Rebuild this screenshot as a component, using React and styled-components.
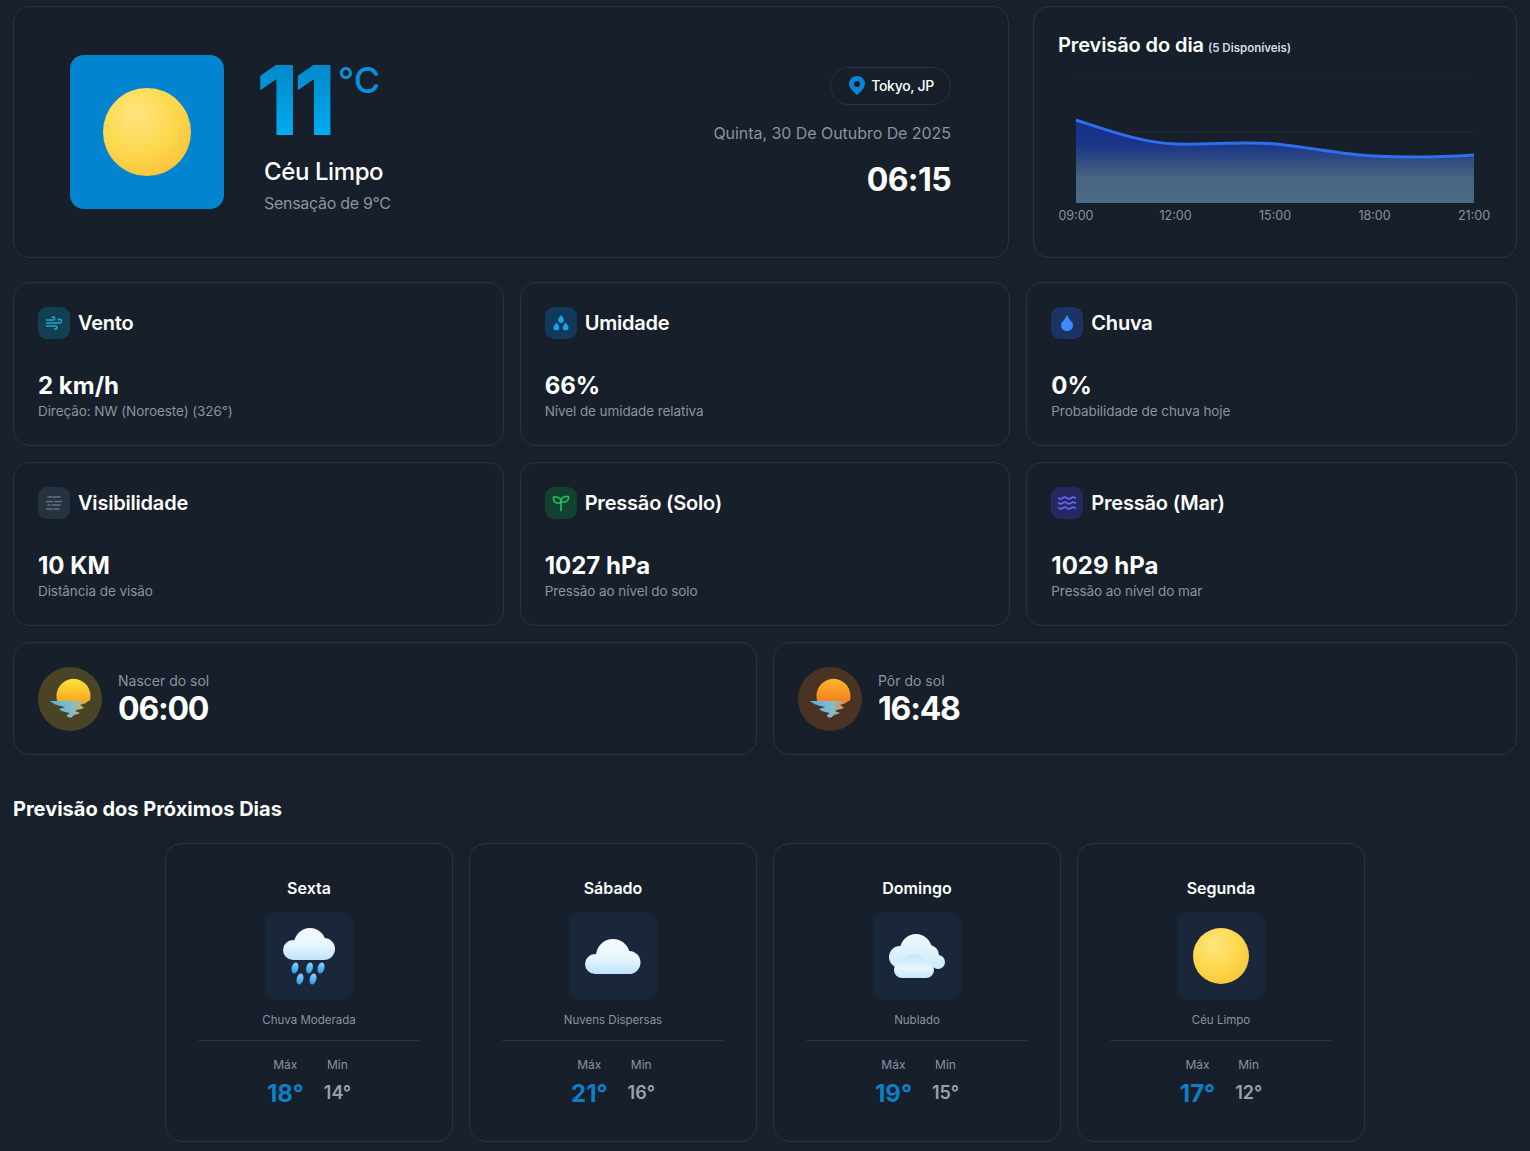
import React from 'react'
import styled, { createGlobalStyle } from 'styled-components'
import { Wind, Waves, Droplet } from 'lucide-react'

const GlobalStyle = createGlobalStyle`
  * { box-sizing: border-box; }
  html, body { margin: 0; padding: 0; background: #17202b; }
  body { font-family: Inter, "Liberation Sans", sans-serif; color: #fff; }
`

const Page = styled.div`
  width: 1530px;
  height: 1151px;
  overflow: hidden;
  padding: 6px 13px 0;
`
const Card = styled.div`
  background: #161f2a;
  border: 1px solid #2a3441;
  border-radius: 16px;
`
const TopRow = styled.div`
  display: grid;
  grid-template-columns: 996px 484px;
  gap: 24px;
`
const Hero = styled(Card)`
  height: 252px;
  padding: 0 57px 0 56px;
  display: flex;
  align-items: center;
  justify-content: space-between;
`
const HeroLeft = styled.div`
  display: flex;
  align-items: center;
  gap: 40px;
`
const HeroIcon = styled.div`
  width: 154px;
  height: 154px;
  border-radius: 14px;
  background: #0284d0;
  display: flex;
  align-items: center;
  justify-content: center;
`
const Sun = styled.div`
  width: ${({ size }) => size}px;
  height: ${({ size }) => size}px;
  border-radius: 50%;
  background: radial-gradient(circle at 38% 30%, #fee57f 0%, #fdd94f 45%, #f5b82e 100%);
`
const HeroInfo = styled.div`
  display: flex;
  flex-direction: column;
  padding-top: 7px;
`
const TempRow = styled.div`
  display: flex;
  align-items: flex-start;
  margin-left: -8px;
`
const TempValue = styled.span`
  font-size: 96px;
  line-height: 86px;
  height: 86px;
  font-weight: 800;
  letter-spacing: -5px;
  background: linear-gradient(180deg, #0284c7 0%, #00b0f5 100%);
  -webkit-background-clip: text;
  background-clip: text;
  color: transparent;
`
const TempUnit = styled.span`
  font-size: 36px;
  line-height: 44px;
  font-weight: 500;
  color: #0a8fd8;
  margin: 1px 0 0 7px;
`
const Condition = styled.div`
  font-size: 24px;
  line-height: 32px;
  font-weight: 500;
  margin-top: 13px;
  letter-spacing: -0.4px;
`
const Feels = styled.div`
  font-size: 16px;
  line-height: 24px;
  letter-spacing: -0.3px;
  color: #8b93a1;
  margin-top: 3px;
`
const HeroRight = styled.div`
  display: flex;
  flex-direction: column;
  align-items: flex-end;
  padding-top: 2px;
`
const LocationPill = styled.div`
  height: 38px;
  padding: 0 16px 0 18px;
  border: 1px solid #2a3441;
  border-radius: 19px;
  display: flex;
  align-items: center;
  gap: 6px;
  font-size: 14px;
  letter-spacing: -0.3px;
  font-weight: 500;
`
const DateText = styled.div`
  font-size: 16px;
  line-height: 24px;
  letter-spacing: -0.05px;
  color: #8b93a1;
  margin-top: 16px;
`
const TimeText = styled.div`
  font-size: 32px;
  line-height: 40px;
  font-weight: 700;
  letter-spacing: -0.6px;
  margin-top: 15px;
`
const ChartCard = styled(Card)`
  height: 252px;
  padding: 24px 24px 0;
`
const ChartTitle = styled.div`
  font-size: 20px;
  line-height: 28px;
  font-weight: 600;
  letter-spacing: -0.1px;
  display: flex;
  align-items: baseline;
  gap: 4px;
`
const ChartNote = styled.span`
  font-size: 11.5px;
  font-weight: 600;
  letter-spacing: 0;
  color: #d7dbe0;
`
const ChartSvg = styled.svg`
  display: block;
  margin-top: 11px;
  text {
    font-family: Inter, "Liberation Sans", sans-serif;
    font-size: 12.5px;
    fill: #8b93a1;
  }
`
const StatGrid = styled.div`
  display: grid;
  grid-template-columns: repeat(3, 1fr);
  gap: 16px;
  margin-top: 24px;
`
const StatCard = styled(Card)`
  height: 164px;
  padding: 24px;
`
const StatHead = styled.div`
  display: flex;
  align-items: center;
  gap: 8px;
  font-size: 20px;
  line-height: 32px;
  font-weight: 600;
  letter-spacing: -0.2px;
`
const IconBox = styled.div`
  width: 32px;
  height: 32px;
  border-radius: 9px;
  background: ${({ bg }) => bg};
  color: ${({ fg }) => fg};
  display: flex;
  align-items: center;
  justify-content: center;
`
const StatValue = styled.div`
  font-size: 24px;
  line-height: 32px;
  font-weight: 700;
  margin-top: 31px;
`
const StatNote = styled.div`
  font-size: 13.5px;
  line-height: 18px;
  letter-spacing: -0.08px;
  color: #8b93a1;
`
const SunGrid = styled.div`
  display: grid;
  grid-template-columns: 1fr 1fr;
  gap: 16px;
  margin-top: 16px;
`
const SunCard = styled(Card)`
  height: 113px;
  padding: 0 24px;
  display: flex;
  align-items: center;
  gap: 16px;
`
const SunBadge = styled.div`
  width: 64px;
  height: 64px;
  border-radius: 50%;
  background: ${({ bg }) => bg};
  display: flex;
  align-items: center;
  justify-content: center;
`
const SunLabel = styled.div`
  font-size: 14px;
  line-height: 18px;
  color: #8b93a1;
  margin-top: 2px;
`
const SunTime = styled.div`
  font-size: 32px;
  line-height: 36px;
  font-weight: 700;
  letter-spacing: -1.2px;
  margin-top: 1px;
`
const SectionTitle = styled.h2`
  margin: 40px 0 0;
  font-size: 20px;
  line-height: 28px;
  font-weight: 700;
`
const ForecastRow = styled.div`
  display: flex;
  justify-content: center;
  gap: 16px;
  margin-top: 20px;
`
const DayCard = styled(Card)`
  width: 288px;
  height: 299px;
  padding: 32px 32px 0;
  display: flex;
  flex-direction: column;
  align-items: center;
`
const DayName = styled.div`
  font-size: 16px;
  line-height: 24px;
  font-weight: 600;
`
const DayIcon = styled.div`
  width: 88px;
  height: 88px;
  margin-top: 12px;
  border-radius: 12px;
  background: #1a2639;
  display: flex;
  align-items: center;
  justify-content: center;
`
const DayDesc = styled.div`
  font-size: 11.5px;
  line-height: 16px;
  color: #8b93a1;
  margin-top: 12px;
`
const Divider = styled.div`
  align-self: stretch;
  height: 1px;
  background: #2a3441;
  margin-top: 12px;
`
const MinMax = styled.div`
  display: flex;
  justify-content: center;
  align-items: flex-start;
  gap: 20px;
  margin-top: 16px;
`
const TempCol = styled.div`
  display: flex;
  flex-direction: column;
  align-items: center;
`
const TempLabel = styled.div`
  font-size: 12px;
  line-height: 16px;
  color: #8b93a1;
`
const MaxValue = styled.div`
  font-size: 24px;
  line-height: 32px;
  font-weight: 700;
  color: #0b7fc8;
  margin-top: 5px;
`
const MinValue = styled.div`
  font-size: 18px;
  line-height: 28px;
  font-weight: 600;
  color: #9aa1ad;
  margin-top: 6px;
`

const PinIcon = () => (
  <svg width="16" height="19" viewBox="0 0 16 19">
    <path d="M8 0C3.600 0 0 3.500 0 7.800 0 13 8 19 8 19s8-6 8-11.200C16 3.500 12.400 0 8 0z" fill="#0a84d4" />
    <circle cx="8" cy="8" r="3" fill="#161f2a" />
  </svg>
)

const VisibilityIcon = () => (
  <svg width="18" height="18" viewBox="0 0 18 18" fill="none" stroke="currentColor" strokeWidth="1.500" strokeLinecap="round">
    <path d="M3 3h3.500M8 3h7M1.500 7.500h6M10 7.500h6.500M3 11h2M7 11h8M1.500 15h5.500M9 15h5" />
  </svg>
)

const DropsIcon = () => (
  <svg width="18" height="18" viewBox="0 0 18 18" fill="currentColor">
    <path d="M9 1c1.600 2 2.900 3.400 2.900 5a2.900 2.900 0 0 1-5.800 0C6.100 4.400 7.400 3 9 1z" />
    <path d="M4.400 8.400c1.600 2 2.900 3.400 2.900 5a2.900 2.900 0 0 1-5.800 0c0-1.600 1.300-3 2.900-5z" />
    <path d="M13.600 8.400c1.600 2 2.900 3.400 2.900 5a2.900 2.900 0 0 1-5.800 0c0-1.600 1.300-3 2.900-5z" />
  </svg>
)

const SproutIcon = () => (
  <svg width="18" height="18" viewBox="0 0 18 18" fill="none" stroke="currentColor" strokeWidth="1.600" strokeLinecap="round" strokeLinejoin="round">
    <path d="M1.500 3h3a5 5 0 0 1 4.500 5v1h-3A4.500 4.500 0 0 1 1.500 4.500z" />
    <path d="M16.500 2.500h-3A4.500 4.500 0 0 0 9 7v1h3a4.500 4.500 0 0 0 4.500-4.500z" />
    <path d="M9 8v8.500" />
  </svg>
)

const SunWater = ({ id, top, bottom }) => (
  <svg width="46" height="42" viewBox="0 0 46 42">
    <defs>
      <linearGradient id={id} x1="0" y1="0" x2="0" y2="1">
        <stop offset="0" stopColor={top} />
        <stop offset="1" stopColor={bottom} />
      </linearGradient>
      <linearGradient id={id + 'w'} x1="0" y1="0" x2="1" y2="0">
        <stop offset="0" stopColor="#4fb3e6" />
        <stop offset="0.6" stopColor="#86bccb" />
        <stop offset="1" stopColor={bottom} />
      </linearGradient>
    </defs>
    <path d="M10.300 23A17 17 0 1 1 42.700 23Z" fill={`url(#${id})`} />
    <path d="M3 23H41C39 26 35 26 33 27C35 28 36 29 37 30C33 32 30 31 28 33C30 34 31 34 33 35C30 37 27 36 26 38C25 40 21 40 20 38C20 36 22 36 23 35C19 34 15 34 12 31C14 30 17 30 18 29C12 28 6 26 3 23Z" fill={`url(#${id}w)`} />
  </svg>
)

// cloud gradients use page units so the stacked circles read as one shape
const CloudDefs = ({ id, y1 = 0, y2 = 32 }) => (
  <defs>
    <linearGradient id={id} gradientUnits="userSpaceOnUse" x1="0" y1={y1} x2="0" y2={y2}>
      <stop offset="0" stopColor="#f6fbff" />
      <stop offset="0.55" stopColor="#e6f5fe" />
      <stop offset="1" stopColor="#bfe3fa" />
    </linearGradient>
    <linearGradient id={id + 'd'} x1="0" y1="0" x2="0" y2="1">
      <stop offset="0" stopColor="#8ed4fb" />
      <stop offset="1" stopColor="#1e9cee" />
    </linearGradient>
  </defs>
)

const RainIcon = () => (
  <svg width="52" height="57" viewBox="0 0 52 57">
    <CloudDefs id="rain" />
    <g fill="url(#rain)">
      <circle cx="27" cy="16" r="16" />
      <circle cx="10" cy="22" r="10" />
      <circle cx="41" cy="21" r="11" />
      <rect x="10" y="16" width="31" height="16" />
    </g>
    {[[12, 40], [26.500, 40], [38, 40], [17, 51], [30, 51]].map(([x, y], i) => (
      <ellipse key={i} cx={x} cy={y} rx="3.300" ry="5.600" transform={`rotate(14 ${x} ${y})`} fill="url(#raind)" />
    ))}
  </svg>
)

const CloudIcon = () => (
  <svg width="56" height="35" viewBox="0 0 56 35">
    <CloudDefs id="cloud" y2={35} />
    <g fill="url(#cloud)">
      <circle cx="28" cy="17" r="17" />
      <circle cx="10" cy="25" r="10" />
      <circle cx="44" cy="23.500" r="11.500" />
      <rect x="10" y="18" width="36" height="17" />
    </g>
  </svg>
)

const CloudsIcon = () => (
  <svg width="56" height="44" viewBox="0 0 56 44">
    <defs>
      <linearGradient id="cloudsBack" gradientUnits="userSpaceOnUse" x1="0" y1="0" x2="0" y2="38">
        <stop offset="0" stopColor="#eef8fe" />
        <stop offset="1" stopColor="#cbe9fb" />
      </linearGradient>
      <linearGradient id="cloudsFront" gradientUnits="userSpaceOnUse" x1="0" y1="20" x2="0" y2="44">
        <stop offset="0" stopColor="#c2e4fa" />
        <stop offset="0.6" stopColor="#e8f6fe" />
        <stop offset="1" stopColor="#c4e6fb" />
      </linearGradient>
    </defs>
    <g fill="url(#cloudsBack)">
      <circle cx="27" cy="16" r="16" />
      <circle cx="11" cy="23" r="11" />
      <circle cx="40" cy="21" r="10" />
      <circle cx="49" cy="28" r="7" />
    </g>
    <g fill="url(#cloudsFront)">
      <circle cx="26" cy="32" r="12" />
      <circle cx="13" cy="36" r="8" />
      <circle cx="37" cy="36" r="8" />
      <rect x="13" y="32" width="24" height="12" />
    </g>
  </svg>
)

const chartLine = 'M18 47C52 58 85 70 118 71C150 72 185 68 217 71C250 74 285 82 316 83C350 85 385 84 416 82'

const days = [
  { name: 'Sexta', icon: <RainIcon />, desc: 'Chuva Moderada', max: 18, min: 14 },
  { name: 'Sábado', icon: <CloudIcon />, desc: 'Nuvens Dispersas', max: 21, min: 16 },
  { name: 'Domingo', icon: <CloudsIcon />, desc: 'Nublado', max: 19, min: 15 },
  { name: 'Segunda', icon: <Sun size={56} />, desc: 'Céu Limpo', max: 17, min: 12 },
]

const stats = [
  { title: 'Vento', value: '2 km/h', note: 'Direção: NW (Noroeste) (326°)', bg: '#123f52', fg: '#22a7cf', icon: <Wind size={18} /> },
  { title: 'Umidade', value: '66%', note: 'Nível de umidade relativa', bg: '#103a5c', fg: '#1ba0ec', icon: <DropsIcon /> },
  { title: 'Chuva', value: '0%', note: 'Probabilidade de chuva hoje', bg: '#1b3360', fg: '#3b8bfa', icon: <Droplet size={18} fill="currentColor" /> },
  { title: 'Visibilidade', value: '10 KM', note: 'Distância de visão', bg: '#263240', fg: '#667183', icon: <VisibilityIcon /> },
  { title: 'Pressão (Solo)', value: '1027 hPa', note: 'Pressão ao nível do solo', bg: '#12422f', fg: '#22c55e', icon: <SproutIcon /> },
  { title: 'Pressão (Mar)', value: '1029 hPa', note: 'Pressão ao nível do mar', bg: '#25295f', fg: '#6366f1', icon: <Waves size={20} /> },
]

export default function App() {
  return (
    <Page>
      <GlobalStyle />
      <TopRow>
        <Hero>
          <HeroLeft>
            <HeroIcon><Sun size={88} /></HeroIcon>
            <HeroInfo>
              <TempRow>
                <TempValue>11</TempValue>
                <TempUnit>°C</TempUnit>
              </TempRow>
              <Condition>Céu Limpo</Condition>
              <Feels>Sensação de 9°C</Feels>
            </HeroInfo>
          </HeroLeft>
          <HeroRight>
            <LocationPill>
              <PinIcon />
              Tokyo, JP
            </LocationPill>
            <DateText>Quinta, 30 De Outubro De 2025</DateText>
            <TimeText>06:15</TimeText>
          </HeroRight>
        </Hero>
        <ChartCard>
          <ChartTitle>Previsão do dia <ChartNote>(5 Disponíveis)</ChartNote></ChartTitle>
          <ChartSvg width="434" height="160" viewBox="0 0 434 160">
            <defs>
              <linearGradient id="area" x1="0" y1="47" x2="0" y2="120" gradientUnits="userSpaceOnUse">
                <stop offset="0" stopColor="#162f8c" />
                <stop offset="0.35" stopColor="#1b3687" />
                <stop offset="0.8" stopColor="#486581" />
                <stop offset="1" stopColor="#4a6783" />
              </linearGradient>
            </defs>
            <path d="M18 0H416M18 59H416" stroke="#202a36" strokeWidth="1" fill="none" />
            <path d={`${chartLine}V130H18Z`} fill="url(#area)" />
            <path d={chartLine} stroke="#2f6fed" strokeWidth="3" fill="none" />
            {['09:00', '12:00', '15:00', '18:00', '21:00'].map((t, i) => (
              <text key={t} x={18 + i * 99.500} y="147" textAnchor="middle">{t}</text>
            ))}
          </ChartSvg>
        </ChartCard>
      </TopRow>

      <StatGrid>
        {stats.map((s) => (
          <StatCard key={s.title}>
            <StatHead>
              <IconBox bg={s.bg} fg={s.fg}>{s.icon}</IconBox>
              {s.title}
            </StatHead>
            <StatValue>{s.value}</StatValue>
            <StatNote>{s.note}</StatNote>
          </StatCard>
        ))}
      </StatGrid>

      <SunGrid>
        <SunCard>
          <SunBadge bg="#4a4426"><SunWater id="rise" top="#ffe23a" bottom="#f9a91e" /></SunBadge>
          <div>
            <SunLabel>Nascer do sol</SunLabel>
            <SunTime>06:00</SunTime>
          </div>
        </SunCard>
        <SunCard>
          <SunBadge bg="#4a3322"><SunWater id="set" top="#fcb52c" bottom="#f5821f" /></SunBadge>
          <div>
            <SunLabel>Pôr do sol</SunLabel>
            <SunTime>16:48</SunTime>
          </div>
        </SunCard>
      </SunGrid>

      <SectionTitle>Previsão dos Próximos Dias</SectionTitle>
      <ForecastRow>
        {days.map((d) => (
          <DayCard key={d.name}>
            <DayName>{d.name}</DayName>
            <DayIcon>{d.icon}</DayIcon>
            <DayDesc>{d.desc}</DayDesc>
            <Divider />
            <MinMax>
              <TempCol>
                <TempLabel>Máx</TempLabel>
                <MaxValue>{d.max}°</MaxValue>
              </TempCol>
              <TempCol>
                <TempLabel>Min</TempLabel>
                <MinValue>{d.min}°</MinValue>
              </TempCol>
            </MinMax>
          </DayCard>
        ))}
      </ForecastRow>
    </Page>
  )
}
